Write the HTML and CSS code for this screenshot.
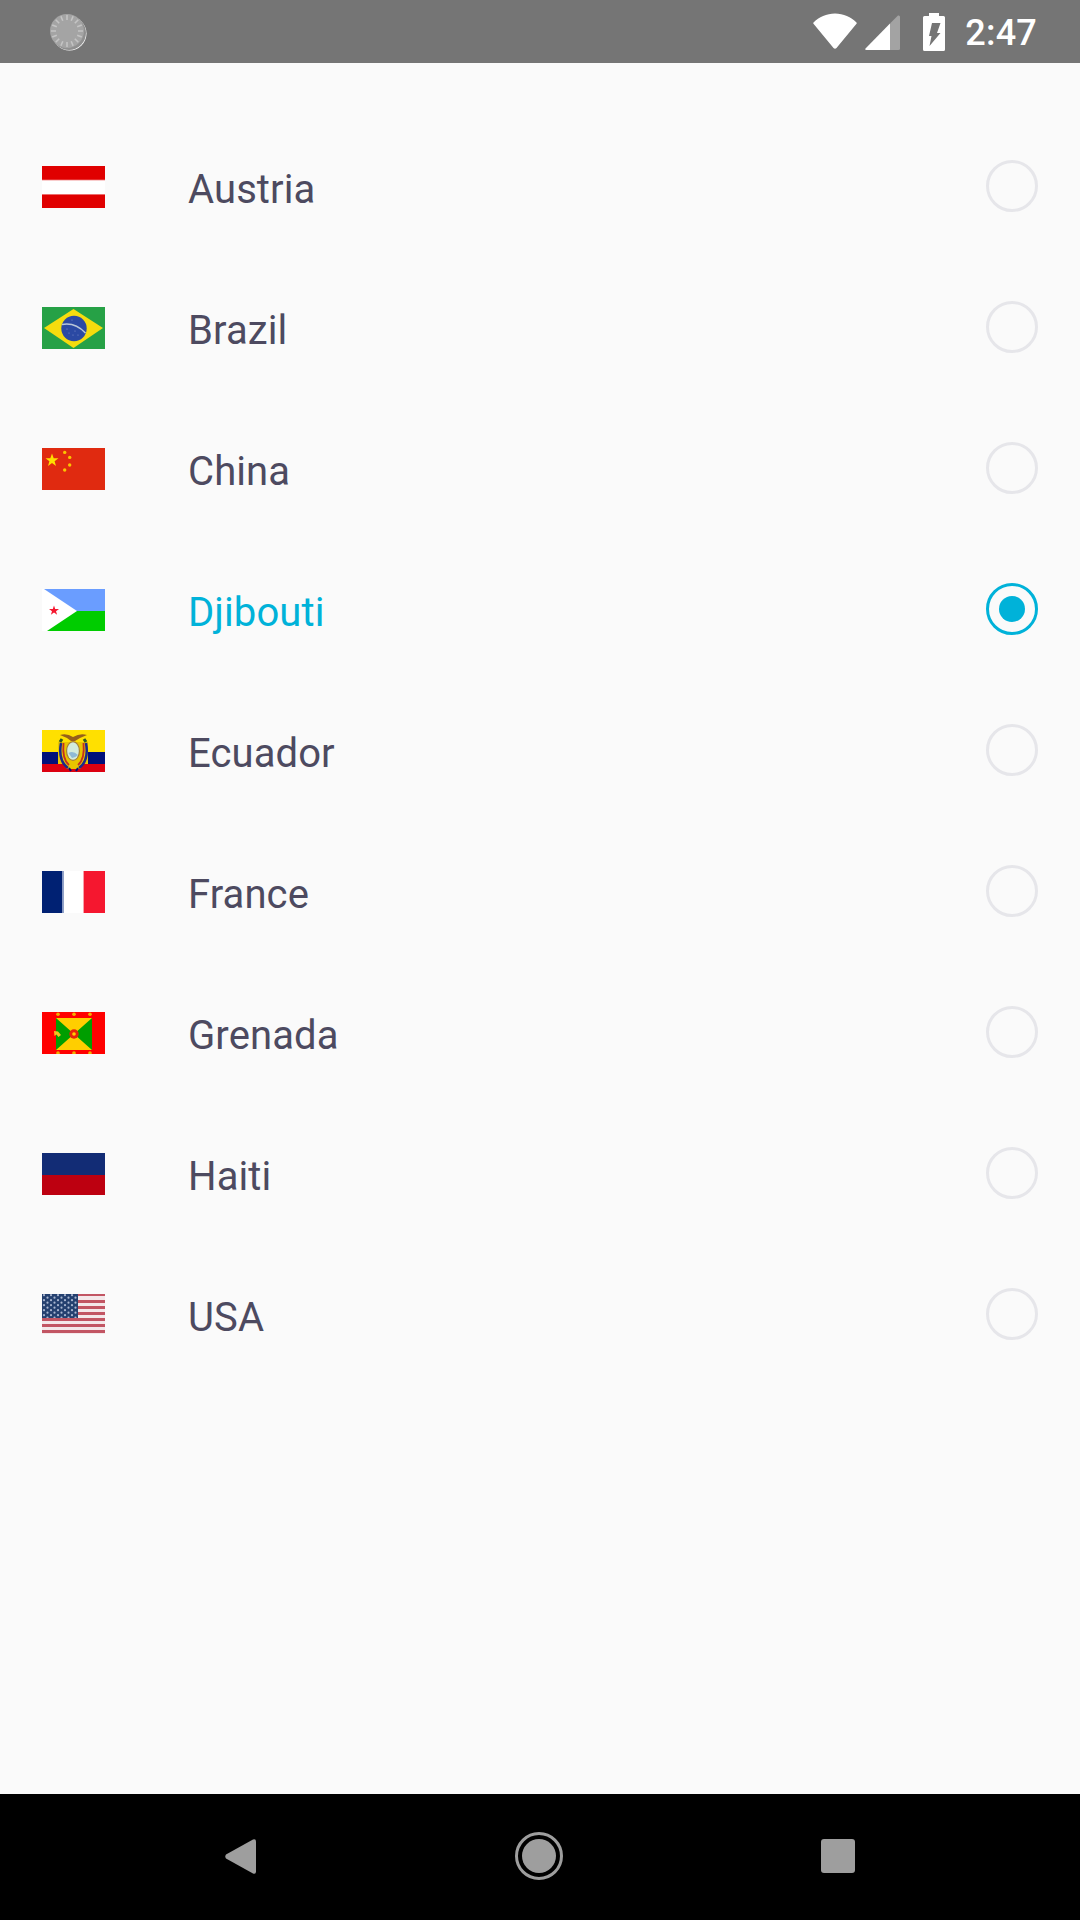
FILE: index.html
```html
<!DOCTYPE html>
<html lang="en">
<head>
<meta charset="utf-8">
<title>Country picker</title>
<link rel="stylesheet" href="styles.css">
</head>
<body>
<div class="phone">
  <header class="statusbar">
    <svg class="sync" viewBox="0 0 40 40">
      <circle cx="21.5" cy="21.5" r="17" fill="#fff"/>
      <circle cx="21" cy="21" r="17" fill="#8f8f8f"/>
      <circle cx="19" cy="19" r="17" fill="#a4a4a4"/>
      <g stroke="#c4c4c4" stroke-width="1.6">
        <path d="M19 3v5M19 30v5M3 19h5M30 19h5M7.7 7.7l3.5 3.5M26.8 26.8l3.5 3.5M30.3 7.7l-3.5 3.5M11.2 26.8l-3.5 3.5M12.9 4.2l1.9 4.6M23.2 29.2l1.9 4.6M25.1 4.2l-1.9 4.6M14.8 29.2l-1.9 4.6M4.2 12.9l4.6 1.9M29.2 23.2l4.6 1.9M33.8 12.9l-4.6 1.9M8.8 23.2l-4.6 1.9"/>
      </g>
    </svg>
    <div class="status-right">
      <svg class="wifi" viewBox="0 0 44 36"><path d="M0.5 9.5C6 4 13.5 0.5 22 0.5S38 4 43.5 9.5Q44 10.300 43.300 11.100L23.500 35Q22 36.400 20.500 35L0.700 11.100Q0 10.300 0.500 9.500Z" fill="#fff"/></svg>
      <svg class="signal" viewBox="0 0 35 35">
        <path d="M33 0.500Q35 0 35 2V33.500Q35 35 33.500 35H25V8.500Z" fill="#a3a3a3"/>
        <path d="M25 8.500V35H1.500Q-0.500 35 0.500 33.500Z" fill="#fff"/>
      </svg>
      <svg class="battery" viewBox="0 0 22 38"><path fill-rule="evenodd" d="M6 0H16V3H20.500Q22 3 22 4.500V36.500Q22 38 20.500 38H1.500Q0 38 0 36.500V4.500Q0 3 1.500 3H6ZM9 10H17.500L14 20H17.500L6.500 33L8.500 23H6Z" fill="#fff"/></svg>
      <span class="clock">2:47</span>
    </div>
  </header>

  <main class="list">
    <div class="row">
      <svg class="flag" viewBox="0 0 63 42"><rect width="63" height="42" fill="#e00000"/><rect y="13.700" width="63" height="15" fill="#f39a9a"/><rect y="14.500" width="63" height="13.500" fill="#fff"/></svg>
      <span class="name">Austria</span><span class="radio"></span>
    </div>
    <div class="row">
      <svg class="flag soft" viewBox="0 0 63 42"><rect width="63" height="42" fill="#26a146"/><path d="M2 21L31.500 2L61 21L31.500 41Z" fill="#f6dc0e"/><circle cx="32" cy="21.500" r="12.700" fill="#2b49a3"/><path d="M20 17.500Q33 15 43.500 26" stroke="#b9c6d8" stroke-width="1.600" fill="none"/><g fill="#7f90cc"><circle cx="27" cy="26" r=".6"/><circle cx="31" cy="28" r=".6"/><circle cx="36" cy="28" r=".6"/><circle cx="25" cy="22" r=".6"/><circle cx="33" cy="24" r=".6"/><circle cx="30" cy="13" r=".6"/></g></svg>
      <span class="name">Brazil</span><span class="radio"></span>
    </div>
    <div class="row">
      <svg class="flag soft" viewBox="0 0 63 42"><rect width="63" height="42" fill="#e02a10"/><path d="M10 5.500L11.700 10.200H16.500L12.600 13.200L14 18L10 15.100L6 18L7.400 13.200L3.500 10.200H8.300Z" fill="#ffdf00"/><g fill="#fbc400"><circle cx="22.700" cy="4.400" r="1.700"/><circle cx="27.700" cy="9.400" r="1.700"/><circle cx="27.700" cy="17" r="1.700"/><circle cx="22.700" cy="22" r="1.700"/></g></svg>
      <span class="name">China</span><span class="radio"></span>
    </div>
    <div class="row">
      <svg class="flag soft" viewBox="0 0 63 42"><rect width="63" height="22" fill="#6a9dff"/><rect y="22" width="63" height="20" fill="#00cc00"/><path d="M0 0H2L35 22L5 42H0Z" fill="#fff"/><path d="M12 16.500L13.200 20H17L14 22.200L15.100 25.700L12 23.600L8.900 25.700L10 22.200L7 20H10.800Z" fill="#f5172f"/></svg>
      <span class="name selected-name">Djibouti</span><span class="radio selected"></span>
    </div>
    <div class="row">
      <svg class="flag soft" viewBox="0 0 63 42"><rect width="63" height="22" fill="#ffe000"/><rect y="22" width="63" height="12" fill="#00107a"/><rect y="34" width="63" height="8" fill="#dc0010"/><path d="M16 12H46V34H41L38 39H25L22 34H16Z" fill="#e8c400"/><path d="M19 13C17 24 19 33 26 38M44 13C46 24 44 33 37 38" stroke="#1a2a8a" stroke-width="2.500" fill="none"/><path d="M21.500 13C20.500 24 22 31 27 35M41.500 13C42.500 24 41 31 36 35" stroke="#c23020" stroke-width="1.800" fill="none"/><path d="M18 12l2 -3M44 12l-2 -3" stroke="#2f5a20" stroke-width="3"/><path d="M18 5Q25 3 31 7Q38 3 45 5L38 8L33 11H29L25 8Z" fill="#96601a"/><ellipse cx="31" cy="21" rx="7" ry="10" fill="#a5803a"/><ellipse cx="31" cy="21" rx="5.800" ry="8.700" fill="#d3ecdc"/><path d="M26.500 23Q31 20 36 25Q33 28 30 28Z" fill="#8fbad6"/><path d="M27 38L29 41M36 38L34 41" stroke="#00107a" stroke-width="2"/></svg>
      <span class="name">Ecuador</span><span class="radio"></span>
    </div>
    <div class="row">
      <svg class="flag" viewBox="0 0 63 42"><rect width="63" height="42" fill="#fff"/><rect width="20.500" height="42" fill="#002173"/><rect x="20.500" width="1.500" height="42" fill="#93a3c9"/><rect x="42" width="63" height="42" fill="#f5172f"/><rect x="41" width="1" height="42" fill="#f8a0aa"/></svg>
      <span class="name">France</span><span class="radio"></span>
    </div>
    <div class="row">
      <svg class="flag soft" viewBox="0 0 63 42"><rect width="63" height="42" fill="#f00"/><rect x="14" y="6" width="36" height="32" fill="#009e00"/><path d="M14 6H50L32 22ZM14 38H50L32 22Z" fill="#ffce00"/><circle cx="32" cy="22" r="4.700" fill="#e8240a"/><circle cx="32" cy="22" r="1.800" fill="#ffce00"/><g fill="#f0b000"><circle cx="16" cy="2.200" r="1.800"/><circle cx="32" cy="2.200" r="1.800"/><circle cx="48" cy="2.200" r="1.800"/><circle cx="16" cy="41" r="1.800"/><circle cx="32" cy="41" r="1.800"/><circle cx="48" cy="41" r="1.800"/></g><path d="M12 19L16 19.500L19 23L16.500 25L14.500 22.500L12.500 24Z" fill="#f7c020"/></svg>
      <span class="name">Grenada</span><span class="radio"></span>
    </div>
    <div class="row">
      <svg class="flag" viewBox="0 0 63 42"><rect width="63" height="22" fill="#122c75"/><rect y="22" width="63" height="20" fill="#bd0010"/></svg>
      <span class="name">Haiti</span><span class="radio"></span>
    </div>
    <div class="row">
      <svg class="flag soft" viewBox="0 0 63 42">
        <defs><pattern id="stars" width="7" height="5" patternUnits="userSpaceOnUse"><circle cx="2" cy="1.200" r="1.100" fill="#a9b6d0"/><circle cx="5.500" cy="3.700" r="1.100" fill="#a9b6d0"/></pattern></defs>
        <rect width="63" height="40" fill="#f4e8ea"/>
        <g fill="#c25563"><rect y="0" width="63" height="2"/><rect y="6" width="63" height="3"/><rect y="12" width="63" height="3"/><rect y="18" width="63" height="3"/><rect y="24" width="63" height="3"/><rect y="30" width="63" height="3"/><rect y="36" width="63" height="3"/></g>
        <rect width="36" height="24" fill="#24406f"/><rect width="36" height="24" fill="url(#stars)"/>
      </svg>
      <span class="name">USA</span><span class="radio"></span>
    </div>
  </main>

  <footer class="navbar">
    <svg class="nav-back" viewBox="0 0 31 35"><path d="M28 0.500Q31 -0.500 31 2.500V32.500Q31 35.500 28 34.500L1 19.500Q-0.500 17.500 1 15.500Z" fill="#9e9e9e"/></svg>
    <svg class="nav-home" viewBox="0 0 48 48"><circle cx="24" cy="24" r="22.500" fill="none" stroke="#9e9e9e" stroke-width="3"/><circle cx="24" cy="24" r="17" fill="#9e9e9e"/></svg>
    <span class="nav-recent"></span>
  </footer>
</div>
</body>
</html>
```
FILE: styles.css
```css
* { box-sizing: border-box; }
html, body { margin: 0; padding: 0; }
body { background: #fafafa; font-family: Roboto, "Liberation Sans", sans-serif; }
.phone { width: 1080px; height: 1920px; display: flex; flex-direction: column; overflow: hidden; }

.statusbar { height: 63px; flex: none; background: #757575; display: flex; align-items: center; justify-content: space-between; padding: 0 43px 0 48px; }
.sync { width: 40px; height: 40px; display: block; }
.status-right { display: flex; align-items: center; }
.wifi { width: 44px; height: 36px; margin-top: -1px; }
.signal { width: 35px; height: 35px; margin-left: 8px; margin-top: 2px; }
.battery { width: 22px; height: 38px; margin-left: 23px; }
.clock { margin-left: 20px; margin-top: 3px; color: #fff; font-size: 36px; font-weight: 500; line-height: 1; letter-spacing: .2px; }

.list { flex: 1; padding-top: 53px; }
.row { height: 141px; display: flex; align-items: center; padding: 0 42px; }
.flag { width: 63px; height: 42px; flex: none; display: block; }
.soft { filter: blur(.35px); }
.name { margin-left: 83px; margin-top: 6px; flex: 1; font-size: 40px; color: #4d4a60; letter-spacing: .1px; }
.selected-name { color: #00b2d9; }
.radio { width: 52px; height: 52px; flex: none; border-radius: 50%; border: 3px solid #e6e6ea; margin-bottom: 2px; display: flex; align-items: center; justify-content: center; }
.selected { border-color: #00b2d9; }
.selected::after { content: ""; width: 26px; height: 26px; border-radius: 50%; background: #00b2d9; }

.navbar { height: 126px; flex: none; background: #000; display: flex; align-items: center; padding-bottom: 2px; }
.nav-back { width: 31px; height: 35px; margin-left: 225px; }
.nav-home { width: 48px; height: 48px; margin-left: 259px; }
.nav-recent { width: 34px; height: 34px; margin-left: 258px; background: #9e9e9e; border-radius: 3px; }
```
